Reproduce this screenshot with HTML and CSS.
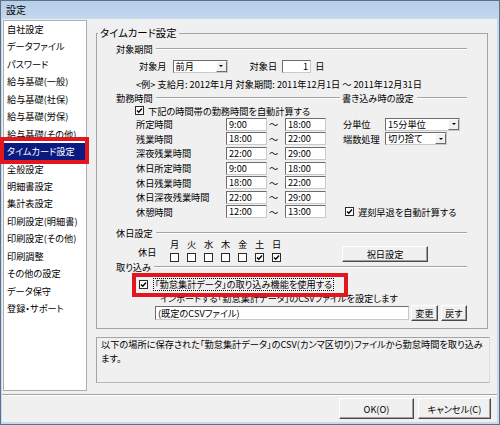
FILE: index.html
```html
<!DOCTYPE html>
<html lang="ja">
<head>
<meta charset="utf-8">
<title>設定</title>
<link rel="stylesheet" href="styles.css">
</head>
<body>
<div class="window">
  <div class="titlebar">設定</div>
  <div class="client">
    <div class="content">
      <ul class="nav">
        <li>自社設定</li>
        <li>データファイル</li>
        <li>パスワード</li>
        <li>給与基礎(一般)</li>
        <li>給与基礎(社保)</li>
        <li>給与基礎(労保)</li>
        <li>給与基礎(その他)</li>
        <li class="sel">タイムカード設定</li>
        <li>全般設定</li>
        <li>明細書設定</li>
        <li>集計表設定</li>
        <li>印刷設定(明細書)</li>
        <li>印刷設定(その他)</li>
        <li>印刷調整</li>
        <li>その他の設定</li>
        <li>データ保守</li>
        <li>登録・サポート</li>
      </ul>
      <div class="main">
        <fieldset class="gb">
          <legend>タイムカード設定</legend>
          <div class="gb-in">
            <div class="sec-h"><span>対象期間</span><i></i></div>
            <div class="period">
              <span>対象月</span>
              <span class="select sel-month"><span class="val">前月</span><span class="dd"></span></span>
              <span class="day-lbl">対象日</span>
              <span class="input day-in">1</span>
              <span class="day-unit">日</span>
            </div>
            <div class="example">&lt;例&gt; 支給月: 2012年1月 対象期間: 2011年12月1日 ～ 2011年12月31日</div>

            <div class="work">
              <div class="sec-h"><span>勤務時間</span><i></i></div>
              <div class="sec-h sec-right"><span>書き込み時の設定</span><i></i></div>

              <div class="chk-row"><span class="cb"><svg viewBox="0 0 7 7" width="7" height="7"><path d="M1 3.4 L2.8 5.2 L6 1.5" fill="none" stroke="#000" stroke-width="1.4"/></svg></span><span>下記の時間帯の勤務時間を自動計算する</span></div>
              <div></div>

              <div class="trow"><span class="tl">所定時間</span><span class="input tin">9:00</span><span class="tilde">～</span><span class="input tin">18:00</span></div>
              <div class="opt"><span class="ol">分単位</span><span class="select sel-unit"><span class="val">15分単位</span><span class="dd"></span></span></div>

              <div class="trow"><span class="tl">残業時間</span><span class="input tin">18:00</span><span class="tilde">～</span><span class="input tin">22:00</span></div>
              <div class="opt"><span class="ol">端数処理</span><span class="select sel-round"><span class="val">切り捨て</span><span class="dd"></span></span></div>

              <div class="trow"><span class="tl">深夜残業時間</span><span class="input tin">22:00</span><span class="tilde">～</span><span class="input tin">29:00</span></div>
              <div></div>

              <div class="trow"><span class="tl">休日所定時間</span><span class="input tin">9:00</span><span class="tilde">～</span><span class="input tin">18:00</span></div>
              <div></div>

              <div class="trow"><span class="tl">休日残業時間</span><span class="input tin">18:00</span><span class="tilde">～</span><span class="input tin">22:00</span></div>
              <div></div>

              <div class="trow"><span class="tl">休日深夜残業時間</span><span class="input tin">22:00</span><span class="tilde">～</span><span class="input tin">29:00</span></div>
              <div></div>

              <div class="trow"><span class="tl">休憩時間</span><span class="input tin">12:00</span><span class="tilde">～</span><span class="input tin">13:00</span></div>
              <div class="opt opt-chk"><span class="cb"><svg viewBox="0 0 7 7" width="7" height="7"><path d="M1 3.4 L2.8 5.2 L6 1.5" fill="none" stroke="#000" stroke-width="1.4"/></svg></span><span>遅刻早退を自動計算する</span></div>
            </div>

            <div class="sec-h sec-hol"><span>休日設定</span><i></i></div>
            <div class="holidays">
              <span class="hol-lbl">休日</span>
              <div class="days">
                <span>月</span><span>火</span><span>水</span><span>木</span><span>金</span><span>土</span><span>日</span>
                <span class="cb"></span><span class="cb"></span><span class="cb"></span><span class="cb"></span><span class="cb"></span>
                <span class="cb"><svg viewBox="0 0 7 7" width="7" height="7"><path d="M1 3.4 L2.8 5.2 L6 1.5" fill="none" stroke="#000" stroke-width="1.4"/></svg></span>
                <span class="cb"><svg viewBox="0 0 7 7" width="7" height="7"><path d="M1 3.4 L2.8 5.2 L6 1.5" fill="none" stroke="#000" stroke-width="1.4"/></svg></span>
              </div>
              <span class="btn btn-hol">祝日設定</span>
            </div>

            <div class="sec-h sec-imp"><span>取り込み</span><i></i></div>
            <div class="imp-chk"><span class="cb"><svg viewBox="0 0 7 7" width="7" height="7"><path d="M1 3.4 L2.8 5.2 L6 1.5" fill="none" stroke="#000" stroke-width="1.4"/></svg></span><span class="focus">「勤怠集計データ」の取り込み機能を使用する</span></div>
            <div class="imp-text">インポートする「勤怠集計データ」のCSVファイルを設定します</div>
            <div class="imp-file">
              <span class="input file-in">(既定のCSVファイル)</span>
              <span class="btn btn-sm btn-chg">変更</span>
              <span class="btn btn-sm btn-back">戻す</span>
            </div>
          </div>
        </fieldset>
        <div class="desc">以下の場所に保存された「勤怠集計データ」のCSV(カンマ区切り)ファイルから勤怠時間を取り込み<br>ます。</div>
      </div>
    </div>
    <div class="footer">
      <span class="btn btn-lg btn-ok">OK(O)</span>
      <span class="btn btn-lg btn-cancel">キャンセル(C)</span>
    </div>
  </div>
  <div class="mark mark-nav"></div>
  <div class="mark mark-imp"></div>
</div>
</body>
</html>
```

FILE: styles.css
```css
* { box-sizing: border-box; }
html, body { margin: 0; padding: 0; }
body {
  width: 500px;
  height: 425px;
  overflow: hidden;
  background: #c6d9ee;
  font-family: "Noto Sans CJK JP", "Noto Sans", sans-serif;
  font-size: 9.2px;
  color: #000;
  font-feature-settings: "palt";
}

.window {
  position: relative;
  width: 500px;
  height: 425px;
  border: 1px solid #5d7189;
  background: linear-gradient(#b7cfe9, #c4d8ee 18px, #c6d9ee);
  padding: 0 2px 2px 1px;
  display: flex;
  flex-direction: column;
}

.titlebar {
  height: 18px;
  line-height: 18px;
  padding-left: 4px;
  font-size: 10px;
  flex: none;
}

.client {
  flex: 1;
  background: #f0f0f0;
  display: flex;
  flex-direction: column;
}

.content {
  height: 375px;
  display: flex;
  padding: 1px 0 0 1px;
  flex: none;
}

/* left list */
.nav {
  width: 84px;
  height: 371px;
  margin: 0;
  padding: 0;
  list-style: none;
  background: #fff;
  border: 1px solid #a9aeb5;
  flex: none;
}
.nav li {
  height: 17.44px;
  line-height: 17.44px;
  padding-left: 3px;
  white-space: nowrap;
}
.nav li.sel {
  background: #0a1a80;
  color: #fff;
}

/* main */
.main {
  width: 394px;
  margin-left: 9px;
  padding-top: 7px;
  flex: none;
}

.gb {
  margin: 0 2px 0 0;
  padding: 0;
  border: 1px solid #a4a4a4;
  height: 302px;
  min-width: 0;
}
.gb legend {
  font-size: 10.4px;
  line-height: 12px;
  padding: 0 2px;
  margin-left: 1px;
}
.gb-in {
  padding: 3px 20px 0 19px;
}

/* section header with etched line */
.sec-h {
  height: 14px;
  display: flex;
  align-items: center;
  white-space: nowrap;
}
.sec-h i {
  flex: 1;
  height: 2px;
  border-top: 1px solid #a4a4a4;
  border-bottom: 1px solid #fff;
  margin-left: 3px;
}
.sec-right span { padding-left: 2px; }

.period {
  height: 20px;
  display: flex;
  align-items: center;
  padding-left: 23px;
  white-space: nowrap;
}
.sel-month { width: 55px; margin-left: 6px; }
.day-lbl { margin-left: 22px; }
.day-in { width: 29px; margin-left: 5px; text-align: right; padding-right: 3px; }
.day-unit { margin-left: 4px; }

.example {
  height: 16px;
  line-height: 16px;
  padding-left: 20px;
  white-space: nowrap;
}

/* inputs */
.input {
  display: inline-block;
  height: 13px;
  line-height: 11px;
  background: #fff;
  border: 1px solid;
  border-color: #6c6c6c #c9c9c9 #c9c9c9 #6c6c6c;
  padding: 0 2px;
  white-space: nowrap;
  overflow: hidden;
}
.select {
  display: inline-flex;
  height: 13px;
  background: #fff;
  border: 1px solid;
  border-color: #6c6c6c #c9c9c9 #c9c9c9 #6c6c6c;
  white-space: nowrap;
}
.select .val {
  flex: 1;
  line-height: 11px;
  padding-left: 2px;
}
.select .dd {
  width: 11px;
  height: 11px;
  background: #f0f0f0;
  border: 1px solid;
  border-color: #fff #6c6c6c #6c6c6c #fff;
  display: flex;
  align-items: center;
  justify-content: center;
}
.select .dd::after {
  content: "";
  border-left: 2px solid transparent;
  border-right: 2px solid transparent;
  border-top: 2px solid #000;
}

/* checkbox */
.cb {
  display: inline-flex;
  width: 9px;
  height: 9px;
  border: 1px solid #2a2a2a;
  background: #fff;
  align-items: center;
  justify-content: center;
  flex: none;
}
.cb svg { display: block; }

/* work grid */
.work {
  display: grid;
  grid-template-columns: 224px 127px;
  grid-template-rows: 12px 13px repeat(7, 14.6px);
}
.work .sec-h { height: 12px; }
.chk-row {
  display: flex;
  align-items: center;
  padding-left: 19px;
  white-space: nowrap;
}
.chk-row .cb { margin-right: 4px; }

.trow {
  display: flex;
  align-items: center;
  padding-left: 20px;
  white-space: nowrap;
}
.tl { width: 90px; }
.tin { width: 41px; }
.tilde { width: 18px; padding-left: 2px; }

.opt {
  display: flex;
  align-items: center;
  padding-left: 3px;
  white-space: nowrap;
}
.ol { width: 42px; }
.sel-unit { width: 75px; }
.sel-round { width: 62px; }
.opt-chk { padding-left: 5px; }
.opt-chk .cb { margin-right: 4px; }

/* holidays */
.sec-hol { margin-top: 7px; }
.holidays {
  height: 22px;
  display: flex;
  white-space: nowrap;
}
.hol-lbl {
  width: 50px;
  padding-left: 22px;
  align-self: center;
  margin-top: 2px;
}
.days {
  display: grid;
  grid-template-columns: repeat(7, 17px);
  grid-template-rows: 9px 9px;
  row-gap: 4px;
  justify-items: center;
  align-items: center;
}
.days span:not(.cb) { line-height: 9px; }
.btn {
  display: inline-flex;
  align-items: center;
  justify-content: center;
  background: #f0f0f0;
  border: 1px solid;
  border-color: #fff #4a4a4a #4a4a4a #fff;
  box-shadow: inset -1px -1px 0 #a0a0a0;
  white-space: nowrap;
}
.btn-hol {
  width: 86px;
  height: 16px;
  margin-left: 57px;
  align-self: flex-end;
}

/* import */
.sec-imp { height: 10px; }
.imp-chk {
  margin-top: 5px;
  height: 15px;
  display: flex;
  align-items: center;
  padding-left: 23px;
  white-space: nowrap;
}
.imp-chk .cb { margin-right: 5px; }
.focus {
  border: 1px dotted #000;
  padding: 0 1px;
  line-height: 11px;
}
.imp-text {
  height: 13px;
  line-height: 13px;
  padding-left: 44px;
  white-space: nowrap;
}
.imp-file {
  height: 16px;
  display: flex;
  align-items: center;
  padding-left: 39px;
}
.file-in { width: 260px; height: 14px; line-height: 12px; }
.btn-sm { width: 27px; height: 16px; }
.btn-chg { margin-left: 2px; }
.btn-back { margin-left: 3px; }

/* description */
.desc {
  margin-top: 8px;
  height: 46px;
  border: 1px solid;
  border-color: #a4a4a4 #dcdcdc #b8b8b8 #a4a4a4;
  padding: 0 4px;
  line-height: 13.6px;
  white-space: nowrap;
}

/* footer */
.footer {
  flex: 1;
  border-top: 1px solid #a4a4a4;
  box-shadow: inset 0 1px 0 #fff;
  padding: 3px 6px 0 0;
  display: flex;
  justify-content: flex-end;
  align-items: flex-start;
  gap: 4px;
}
.btn-lg { height: 21px; }
.btn-ok { width: 75px; }
.btn-cancel { width: 73px; }

/* red annotation overlays */
.mark {
  position: absolute;
  border: 4px solid #e3161e;
}
.mark-nav { left: -1px; top: 136px; width: 89px; height: 27px; border-width: 4.5px; }
.mark-imp { left: 131px; top: 272px; width: 216px; height: 24px; }
```
